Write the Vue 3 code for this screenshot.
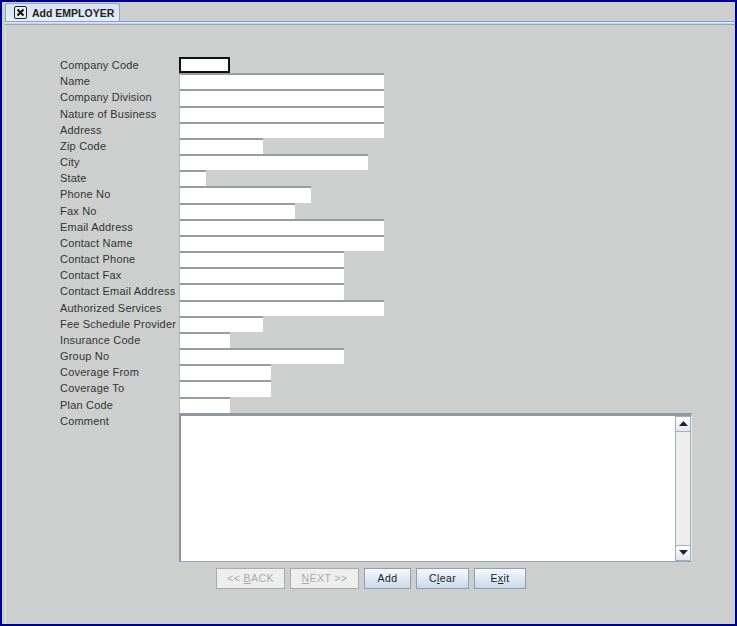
<script setup>
const fields = [
  ['Company Code', 51], ['Name', 205], ['Company Division', 205], ['Nature of Business', 205],
  ['Address', 205], ['Zip Code', 84], ['City', 189], ['State', 27], ['Phone No', 132], ['Fax No', 116],
  ['Email Address', 205], ['Contact Name', 205], ['Contact Phone', 165], ['Contact Fax', 165],
  ['Contact Email Address', 165], ['Authorized Services', 205], ['Fee Schedule Provider', 84],
  ['Insurance Code', 51], ['Group No', 165], ['Coverage From', 92], ['Coverage To', 92], ['Plan Code', 51]
]
</script>

<template>
  <div class="frame">
    <div class="tabbar">
      <div class="tab">
        <svg class="close" width="13" height="13" viewBox="0 0 13 13">
          <rect x="0.5" y="0.5" width="12" height="12" rx="1.5" fill="#e8edf3" stroke="#222" />
          <path d="M3.5 3.5 L9.5 9.5 M9.5 3.5 L3.5 9.5" stroke="#111" stroke-width="2" />
        </svg>
        <span>Add EMPLOYER</span>
      </div>
    </div>
    <div class="rule"></div>
    <div class="panel">
      <div class="form">
        <div v-for="(f, i) in fields" :key="f[0]" class="row">
          <label class="label">{{ f[0] }}</label>
          <div class="input" :class="{ focused: i === 0 }" :style="{ width: f[1] + 'px' }"></div>
        </div>
        <div class="row comment-row">
          <label class="label">Comment</label>
          <div class="comment">
            <div class="text"></div>
            <div class="scroll">
              <div class="arrow"><svg width="9" height="5" viewBox="0 0 9 5"><path d="M4.5 0 L9 5 H0 Z" fill="#222" /></svg></div>
              <div class="track"></div>
              <div class="arrow"><svg width="9" height="5" viewBox="0 0 9 5"><path d="M0 0 H9 L4.5 5 Z" fill="#222" /></svg></div>
            </div>
          </div>
        </div>
        <div class="buttons">
          <button class="btn off w69"><span>&lt;&lt; <u>B</u>ACK</span></button>
          <button class="btn off w69"><span><u>N</u>EXT &gt;&gt;</span></button>
          <button class="btn w47">Add</button>
          <button class="btn w53">C<u>l</u>ear</button>
          <button class="btn w52">E<u>x</u>it</button>
        </div>
      </div>
    </div>
  </div>
</template>

<style scoped>
.frame {
  box-sizing: border-box;
  width: 737px;
  height: 626px;
  border: 2px solid #00008e;
  border-top-width: 2px;
  background: #cdcfce;
  font-family: "Liberation Sans", Arial, sans-serif;
  font-size: 11px;
  color: #333;
  display: flex;
  flex-direction: column;
  overflow: hidden;
}
.tabbar {
  height: 19px;
  padding: 1px 0 0 3px;
  box-sizing: border-box;
  flex: none;
}
.tab {
  width: 115px;
  height: 18px;
  box-sizing: border-box;
  display: flex;
  align-items: center;
  gap: 5px;
  padding-left: 8px;
  background: linear-gradient(#d6e2f2, #e6eefa);
  border: 1px solid #8fa5c0;
  border-bottom: none;
  border-radius: 3px 3px 0 0;
  font-weight: bold;
  font-size: 10.5px;
  color: #222;
}
.close { flex: none; }
.rule {
  flex: none;
  height: 4px;
  margin-left: 3px;
  background: linear-gradient(#7f9fdc 0 1px, #dfe8fa 1px 2px, #c4d2ea 2px 3px, #9aa3ad 3px 4px);
}
.panel {
  flex: 1;
  margin-left: 3px;
  border-left: 1px solid #dcdedd;
  padding: 32px 0 0 54px;
}
.row {
  display: flex;
  height: 16.18px;
}
.label {
  width: 119px;
  flex: none;
  line-height: 16px;
  letter-spacing: 0.2px;
  color: #333;
}
.input {
  box-sizing: border-box;
  height: 16.18px;
  background: #fff;
  border-top: 2px solid #9a9d9f;
  border-left: 1px solid #b4b7b9;
}
.input.focused {
  border: 2px solid #111;
  height: 16px;
}
.comment-row { height: 149px; }
.comment {
  width: 513px;
  height: 149px;
  box-sizing: border-box;
  margin-top: 0;
  display: flex;
  border-top: 3px solid #9298a0;
  border-left: 2px solid #8f9397;
  border-bottom: 1px solid #9aa6b5;
  border-right: 1px solid #e4e6e8;
}
.text { flex: 1; background: #fff; }
.scroll {
  width: 14px;
  flex: none;
  display: flex;
  flex-direction: column;
  background: #eeeeef;
  border-left: 1px solid #9fb0c6;
  border-right: 1px solid #9fb0c6;
  box-sizing: content-box;
}
.arrow {
  height: 14px;
  flex: none;
  display: flex;
  align-items: center;
  justify-content: center;
  background: linear-gradient(#fff, #dfe7f1);
  border-top: 1px solid #9fb0c6;
  border-bottom: 1px solid #9fb0c6;
}
.track { flex: 1; }
.buttons {
  display: flex;
  gap: 5px;
  margin: 6px 0 0 156px;
}
.btn {
  box-sizing: border-box;
  height: 21px;
  padding: 0;
  font-family: inherit;
  font-size: 10.5px;
  letter-spacing: 0.4px;
  color: #222;
  background: linear-gradient(#f6f9fc, #c9d9ea);
  border: 1px solid #8ba0b5;
}
.btn.off {
  background: #eeeeee;
  border-color: #a9abac;
  color: #a9abac;
}
.w69 { width: 69px; }
.w47 { width: 47px; }
.w53 { width: 53px; }
.w52 { width: 52px; }
</style>

<style>
html, body { margin: 0; }
</style>
